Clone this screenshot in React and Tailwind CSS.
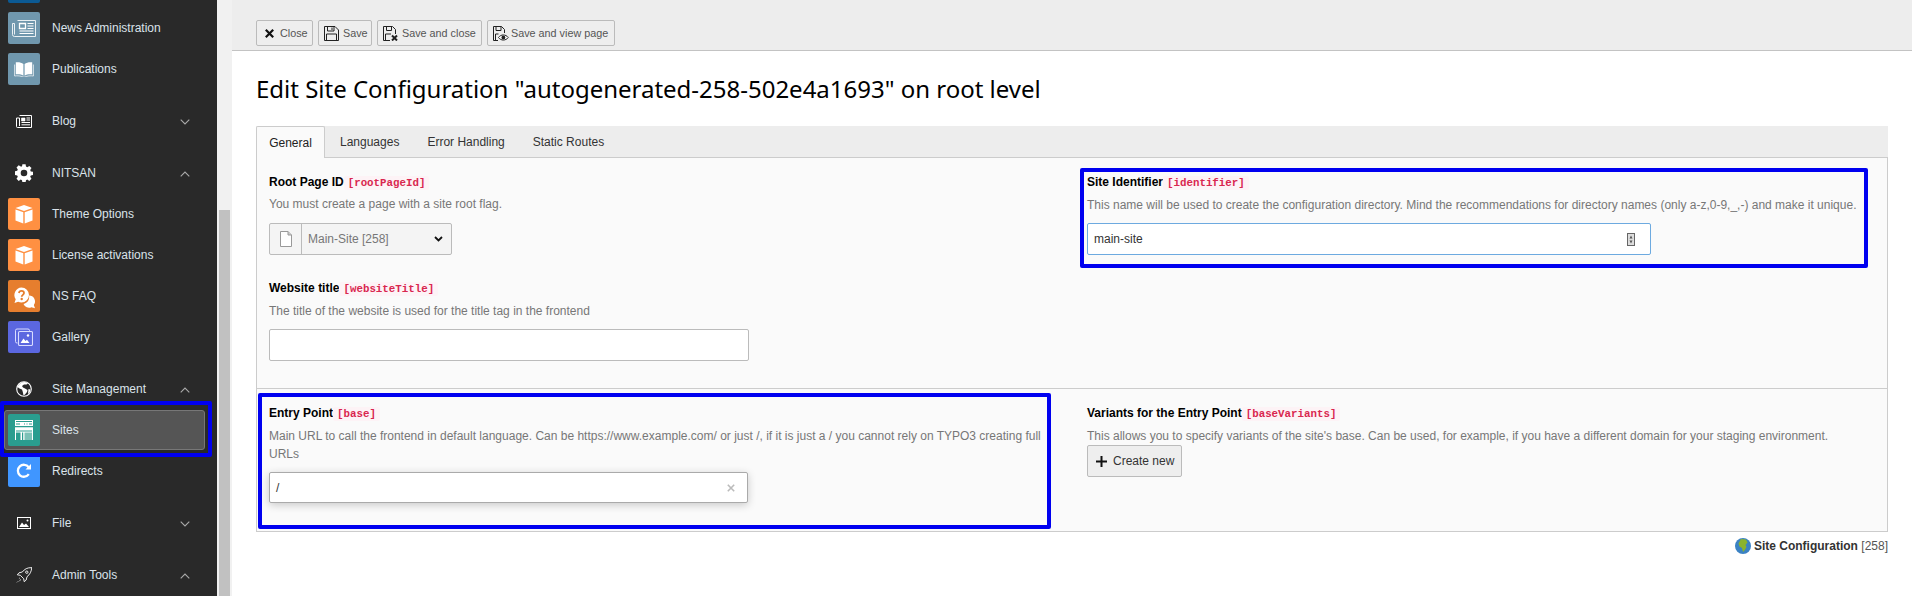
import React from "react";

const Floppy = ({ children }) => (
  <svg width="15" height="15" viewBox="0 0 15 15" fill="none" stroke="#222" strokeWidth="1" className="shrink-0">
    <path d="M.5.500h10.500l3.500 3.500v10.500H.5z" />
    <path d="M3.500.5v4.500h6.500V.5M8 1.500v2.500M2.500 14.500V8h10v6.500" />
    {children}
  </svg>
);
const FloppyX = () => (
  <svg width="15" height="15" viewBox="0 0 15 15" fill="none" stroke="#222" strokeWidth="1" className="shrink-0">
    <path d="M7 14.500H.5V.5h9l3 3V8" />
    <path d="M3.500.5v4h5v-4M2.500 14.500V8h5.500" />
    <path d="M9 9.500l5 5M14 9.500l-5 5" strokeWidth="2" />
  </svg>
);
const FloppyEye = () => (
  <svg width="16" height="15" viewBox="0 0 16 15" fill="none" stroke="#222" strokeWidth="1" className="shrink-0">
    <path d="M5 14.500H.5V.5h8l3 3V7" />
    <path d="M3 .5v4h5v-4M2.500 14.500V8h3" />
    <path d="M5.500 11.500c2.500-3.400 7-3.400 9.800 0-2.800 3.400-7.300 3.400-9.800 0z" fill="#fff" />
    <circle cx="10.400" cy="11.500" r="1.900" fill="#222" stroke="none" />
  </svg>
);
const Chevron = ({ up }) => (
  <svg width="10" height="6" viewBox="0 0 10 6" fill="none" stroke="#aaa" strokeWidth="1.100" className="absolute right-[27px] top-[18px]">
    <path d={up ? "M.7 5.300L5 1l4.300 4.300" : "M.7.700L5 5l4.300-4.300"} />
  </svg>
);

const IconBox = ({ color, children }) => (
  <span className={`flex h-8 w-8 shrink-0 items-center justify-center overflow-hidden rounded-[2px] ${color}`}>{children}</span>
);

const Cube = () => (
  <svg width="18" height="19" viewBox="0 0 18 19">
    <path d="M9 0l8.500 3L9 6 .5 3z" fill="#fff" />
    <path d="M.5 4.500L8.300 7.300V18.500L.5 15.500zM17.500 4.500L9.700 7.300V18.500l7.800-3z" fill="#fff" />
  </svg>
);
const News = () => (
  <svg width="24" height="17" viewBox="0 0 24 17" fill="none" stroke="#fff" strokeWidth="1">
    <path d="M5.500.5h18v16H2.500a2 2 0 0 1-2-2V3.500h2v11" opacity=".85" />
    <path d="M7.500 3.500h6v5h-6z" strokeWidth="1.300" />
    <path d="M15.500 3.500h6M15.500 6h6M15.500 8.500h6M7.500 11h14M7.500 13.500h14" strokeWidth="1.100" />
  </svg>
);
const Book = () => (
  <svg width="20" height="15" viewBox="0 0 20 15">
    <path d="M9.400 2C7.500.3 4.500 0 1.800.300v12c2.800-.3 5.600 0 7.600 1.500zM10.600 2c1.900-1.700 4.900-2 7.600-1.700v12c-2.800-.3-5.600 0-7.600 1.500z" fill="#fff" />
    <path d="M.6 2.500V14c3-.4 6-.2 8.500 1h1.800c2.500-1.200 5.500-1.400 8.500-1V2.500" fill="none" stroke="#fff" strokeWidth=".7" />
  </svg>
);
const Faq = () => (
  <svg width="32" height="32" viewBox="0 0 32 32">
    <path d="M21 15.500a6 6 0 0 1 4.800 9.600l1.200 3.200-3.600-1.100A6 6 0 0 1 15.500 24c4-1 6.300-4.400 5.500-8.500z" fill="#fff" />
    <path d="M13.500 7.500a7.500 7.500 0 0 1 0 15c-1.200 0-2.300-.3-3.300-.8L6.500 23l1.200-3.800A7.500 7.500 0 0 1 13.500 7.500z" fill="#fff" />
    <path d="M10.900 13c.2-1.400 1.200-2.200 2.600-2.200s2.500.9 2.500 2.200c0 1.900-2.300 1.900-2.300 3.800" fill="none" stroke="#e67e2e" strokeWidth="1.800" />
    <circle cx="13.700" cy="19" r="1.200" fill="#e67e2e" />
  </svg>
);
const Gallery = () => (
  <svg width="18" height="18" viewBox="0 0 18 18" fill="none" stroke="#d8dcff" strokeWidth="1">
    <path d="M2.500 15H2a1.500 1.500 0 0 1-1.500-1.500v-11A1.500 1.500 0 0 1 2 1h11a1.500 1.500 0 0 1 1.500 1.500V3" />
    <rect x="3.500" y="3.500" width="14" height="14" rx="1.200" strokeWidth="1.100" />
    <path d="M5.500 15l3-4.500 2 2.500 1.500-1.200 2.500 3.200z" fill="#fff" stroke="none" />
    <circle cx="13" cy="7.500" r="1.200" fill="#fff" stroke="none" />
  </svg>
);
const SitesIcon = () => (
  <svg width="18" height="20" viewBox="0 0 18 20">
    <path d="M0 0h18v20H0z" fill="#fff" />
    <path d="M1 1h16v1H1z" fill="#2a9d8f" />
    <path d="M1 3.500h4v1H1zM9 3.500h1v1H9zM11.500 3.500h1v1h-1zM14 3.500h3v1h-3z" fill="#2a9d8f" />
    <path d="M0 6h18v1.300H0z" fill="#2a9d8f" />
    <path d="M1 10.500h16v1H1z" fill="#2a9d8f" />
    <path d="M1 12.500h4.500V20H1zM7 12.500h1.200V20H7z" fill="#2a9d8f" />
    <path d="M9.500 12.500H17V20H9.500z" fill="#7cc1b7" />
  </svg>
);
const Redo = () => (
  <svg width="16" height="16" viewBox="0 0 16 16" fill="none">
    <path d="M12.800 11.200A6 6 0 1 1 12.700 4.200" stroke="#fff" strokeWidth="2.300" />
    <path d="M9.500 6.500H15V1z" fill="#fff" />
  </svg>
);

const BlogIcon = () => (
  <svg width="16" height="13" viewBox="0 0 16 13" fill="none" stroke="#fff" strokeWidth="1">
    <path d="M3.500.5h12v12H1.500a1 1 0 0 1-1-1V3h3v8" />
    <path d="M5.500 3h3.500v3H5.500z" fill="#fff" strokeWidth=".6" />
    <path d="M10.500 3h3.500M10.500 5h3.500M5.500 7.500h8.500M5.500 9.800h8.500" />
  </svg>
);
const Gear = () => (
  <svg width="18" height="18" viewBox="0 0 18 18">
    <path fill="#fff" fillRule="evenodd" d="M7.400.3h3.200l.4 2.300 1.300.6 2-1.300 2.200 2.200-1.300 2 .6 1.300 2.300.4v3.200l-2.300.4-.6 1.300 1.300 2-2.200 2.200-2-1.300-1.300.6-.4 2.300H7.400l-.4-2.300-1.300-.6-2 1.300-2.200-2.200 1.300-2-.6-1.300-2.300-.4V7.200l2.300-.4.6-1.300-1.300-2 2.200-2.200 2 1.300L7 2.600zM9 5.700a3.300 3.300 0 1 0 0 6.600 3.300 3.300 0 0 0 0-6.600z" />
  </svg>
);
const Globe = () => (
  <svg width="16" height="16" viewBox="0 0 16 16">
    <circle cx="8" cy="8" r="7.300" fill="none" stroke="#fff" strokeWidth="1.100" />
    <path d="M9 1C5 1 2.500 3 1.500 6l2 1.500 2.500 1 .8 2.500.7 3.500 1.500-1 2-2.500.5-2-2.500-1.500-2-1L6 5l2-1.500 2.500 0L12 2.500z" fill="#fff" />
    <path d="M12.500 8l2 .5-1 3.500-1.500 1z" fill="#fff" />
  </svg>
);
const ImageIcon = () => (
  <svg width="14" height="12" viewBox="0 0 14 12">
    <rect x=".5" y=".5" width="13" height="11" fill="none" stroke="#fff" />
    <path d="M2 10l3-4.500 2 2.500 2-1.500 3 3.500z" fill="#fff" />
    <circle cx="10.500" cy="3.500" r="1" fill="#fff" />
  </svg>
);
const Rocket = () => (
  <svg width="16" height="16" viewBox="0 0 16 16" fill="none" stroke="#fff" strokeWidth=".9">
    <path d="M15.300.7c-3.700-.2-6.800 1.300-9 4.300L3 5.800 1.300 7.800l3 .5 3.400 3.400.5 3 2-1.700.8-3.300c3-2.200 4.500-5.300 4.800-9.500z" />
    <circle cx="10.800" cy="5.200" r="1.200" />
    <path d="M3.700 11l-1.200 1M5 12.300l-2.500 2.500M1 15.300l1-1" strokeDasharray="1 .6" />
  </svg>
);

const Item = ({ box, icon, label, active, outlined }) => (
  <div className="relative mb-px flex h-10 items-center">
    {active && <span className="absolute inset-y-0 left-1 right-3 rounded-[3px] border border-[#777] bg-[#555]" />}
    <span className="relative z-10 ml-2 mr-3 flex">
      <IconBox color={box}>{icon}</IconBox>
    </span>
    <span className="relative z-10">{label}</span>
    {outlined && <span className="pointer-events-none absolute -top-[9px] left-0 z-20 h-[56px] w-[212px] rounded-[2px] border-4 border-[#0000f0]" />}
  </div>
);
const Head = ({ icon, label, up, down }) => (
  <div className="relative mb-px mt-3 flex h-10 items-center">
    <span className="ml-2 mr-3 flex h-8 w-8 items-center justify-center">{icon}</span>
    <span>{label}</span>
    {(up || down) && <Chevron up={up} />}
  </div>
);

const Btn = ({ icon, children, w }) => (
  <button className={`flex h-[26px] items-center whitespace-nowrap rounded-[2px] border border-[#bbb] bg-[#eee] text-[10.800px] text-[#555] ${w}`}>
    {icon}
    {children}
  </button>
);

const Code = ({ children }) => (
  <code className="rounded-[2px] bg-[#fdf3f6] px-[4px] py-[1px] font-['Liberation_Mono',monospace] text-[10.800px] font-bold text-[#d9264f]">{children}</code>
);
const Label = ({ children, code }) => (
  <div className="h-[18px] text-[12px] font-bold leading-[18px] text-black">
    {children}
    <Code>{code}</Code>
  </div>
);
const Help = ({ children, className = "" }) => (
  <div className={`text-[12px] leading-[18px] text-[#777] ${className}`}>{children}</div>
);

export default function App() {
  return (
    <div className="flex h-[596px] w-[1912px] overflow-hidden bg-white font-['Liberation_Sans',Arial,sans-serif] text-[12px]">
      <aside className="w-[217px] shrink-0 overflow-hidden bg-[#292929] text-[#dbe3ea]">
        <div className="-mt-[33px]">
          <Item box="bg-[#0b5a94]" label="" />
          <Item box="bg-[#7097ad]" icon={<News />} label="News Administration" />
          <Item box="bg-[#7097ad]" icon={<Book />} label="Publications" />
          <Head icon={<BlogIcon />} label="Blog" down />
          <Head icon={<Gear />} label="NITSAN" up />
          <Item box="bg-[#ff9042]" icon={<Cube />} label="Theme Options" />
          <Item box="bg-[#ff9042]" icon={<Cube />} label="License activations" />
          <Item box="bg-[#e67e2e]" icon={<Faq />} label="NS FAQ" />
          <Item box="bg-[#5b67e0]" icon={<Gallery />} label="Gallery" />
          <Head icon={<Globe />} label="Site Management" up />
          <Item box="bg-[#2a9d8f]" icon={<SitesIcon />} label="Sites" active outlined />
          <Item box="bg-[#4096ff]" icon={<Redo />} label="Redirects" />
          <Head icon={<ImageIcon />} label="File" down />
          <Head icon={<Rocket />} label="Admin Tools" up />
        </div>
      </aside>

      <div className="flex w-[15px] shrink-0 flex-col bg-[#f1f1f1] pl-[2px] pt-[210px]">
        <div className="h-full w-[11px] bg-[#c1c1c1]" />
      </div>

      <main className="min-w-0 flex-1">
        <div className="flex h-[51px] gap-[5px] border-b border-[#c3c3c3] bg-[#ededed] pl-6 pt-5">
          <Btn w="w-[57px]" icon={<span className="ml-[6px] mr-[5px] flex w-3 justify-center"><svg width="9" height="9" viewBox="0 0 9 9" stroke="#111" strokeWidth="2.200"><path d="M.8.800l7.400 7.400M8.200.800L.8 8.200" /></svg></span>}>Close</Btn>
          <Btn w="w-[54px]" icon={<span className="ml-[5px] mr-[4px] flex"><Floppy /></span>}>Save</Btn>
          <Btn w="w-[105px]" icon={<span className="ml-[5px] mr-[4px] flex"><FloppyX /></span>}>Save and close</Btn>
          <Btn w="w-[128px]" icon={<span className="ml-[5px] mr-[2px] flex"><FloppyEye /></span>}>Save and view page</Btn>
        </div>

        <div className="px-6">
          <h1 className="mt-5 h-[36px] font-['Noto_Sans',sans-serif] text-[24px] leading-[36px] tracking-[-0.01px] text-black">
            Edit Site Configuration "autogenerated-258-502e4a1693" on root level
          </h1>

          <div className="mt-[19px] border border-t-0 border-[#ccc] bg-[#fafafa]">
            <div className="-mx-px flex h-8 border-b border-[#ccc] bg-[#ededed] text-[12px] text-[#333]">
              <div className="-mb-px flex h-8 w-[69px] items-center justify-center rounded-t-[2px] border border-b-0 border-[#ccc] bg-[#fafafa] text-[#222]">General</div>
              <div className="flex items-center px-[14px] pl-[15px]">Languages</div>
              <div className="flex items-center px-[14px]">Error Handling</div>
              <div className="flex items-center px-[14px]">Static Routes</div>
            </div>

            <div className="flex border-b border-[#ccc] pb-[27px]">
              <div className="w-[815px] shrink-0 pl-3 pt-[15px]">
                <Label code="[rootPageId]">Root Page ID</Label>
                <Help className="mt-1">You must create a page with a site root flag.</Help>
                <div className="mt-[10px] flex h-8 w-[183px] rounded-[2px] border border-[#bbb] bg-[#f4f4f4]">
                  <div className="flex w-[32px] items-center justify-center border-r border-[#bbb]">
                    <svg width="12" height="16" viewBox="0 0 12 16" fill="none" stroke="#999"><path d="M.5.500h7.500l3.500 3.500v11.500H.5z" fill="#fff" /><path d="M8 .5v3.500h3.500" fill="#ccc" /></svg>
                  </div>
                  <div className="flex flex-1 items-center justify-between pl-[6px] pr-[8px] text-[#777]">
                    Main-Site [258]
                    <svg width="9" height="6" viewBox="0 0 9 6" fill="none" stroke="#111" strokeWidth="1.800"><path d="M1 1l3.500 3.500L8 1" /></svg>
                  </div>
                </div>
                <div className="mt-6"><Label code="[websiteTitle]">Website title</Label></div>
                <Help className="mt-[5px]">The title of the website is used for the title tag in the frontend</Help>
                <div className="mt-[9px] h-8 w-[480px] rounded-[2px] border border-[#bbb] bg-white" />
              </div>
              <div className="flex-1 pl-2 pt-[10px]">
                <div className="h-[100px] w-[788px] rounded-[2px] border-4 border-[#0000f0] pl-[3px] pt-px">
                  <Label code="[identifier]">Site Identifier</Label>
                  <Help className="mt-[5px]">This name will be used to create the configuration directory. Mind the recommendations for directory names (only a-z,0-9,_,-) and make it unique.</Help>
                  <div className="mt-[9px] flex h-8 w-[564px] items-center justify-between rounded-[2px] border border-[#6daae0] bg-white pl-[6px] pr-[15px] text-[#333]">
                    main-site
                    <svg width="8" height="13" viewBox="0 0 8 13"><rect x=".5" y=".5" width="7" height="12" fill="#ddd" stroke="#666" /><path d="M4 2.500l1.500 3h-3zM4 10.500l-1.500-3h3z" fill="#555" /></svg>
                  </div>
                </div>
              </div>
            </div>

            <div className="flex pb-[2px]">
              <div className="w-[815px] shrink-0 pl-px pt-1">
                <div className="h-[136px] w-[793px] rounded-[2px] border-4 border-[#0000f0] pl-[7px] pr-1 pt-[7px]">
                  <Label code="[base]">Entry Point</Label>
                  <Help className="mt-[5px]">Main URL to call the frontend in default language. Can be https://www.example.com/ or just /, if it is just a / you cannot rely on TYPO3 creating full URLs</Help>
                  <div className="mt-[9px] flex h-[31px] w-[479px] items-center justify-between rounded-[2px] border border-[#aaa] bg-white pl-[6px] pr-[12px] text-[#333] shadow-[0_2px_8px_rgba(0,0,0,0.2)]">
                    /
                    <svg width="8" height="8" viewBox="0 0 8 8" stroke="#bbb" strokeWidth="1.600"><path d="M.8.800l6.400 6.400M7.200.800L.8 7.200" /></svg>
                  </div>
                </div>
              </div>
              <div className="flex-1 pl-[15px] pt-[15px]">
                <Label code="[baseVariants]">Variants for the Entry Point</Label>
                <Help className="mt-[5px]">This allows you to specify variants of the site's base. Can be used, for example, if you have a different domain for your staging environment.</Help>
                <button className="flex h-8 w-[95px] items-center gap-[6px] rounded-[2px] border border-[#bbb] bg-[#eee] pl-2 text-[#333]">
                  <svg width="11" height="11" viewBox="0 0 11 11" stroke="#111" strokeWidth="2"><path d="M5.500 0v11M0 5.500h11" /></svg>
                  Create new
                </button>
              </div>
            </div>
          </div>

          <div className="mt-[5px] flex h-[18px] items-center justify-end gap-[3px] text-[12px] text-[#333]">
            <svg width="16" height="16" viewBox="0 0 16 16"><circle cx="8" cy="8" r="8" fill="#3b82c4" /><path d="M6 1l5 .5 1.500 3-2 2.500 1 2-2 3.500-1.500 1.500-1-4-2.500-1.500L3.500 5.500z" fill="#8ab32f" /></svg>
            <span><b className="text-[#333]">Site Configuration</b> <span className="text-[#555]">[258]</span></span>
          </div>
        </div>
      </main>
    </div>
  );
}
